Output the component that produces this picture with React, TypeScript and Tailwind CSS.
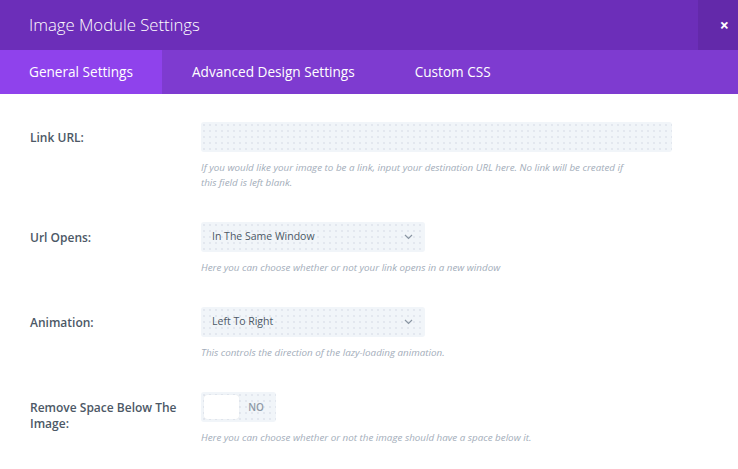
import React from "react";

const dots =
  "bg-[#f1f5f9] bg-[radial-gradient(#e2e7ee_0.7px,transparent_0.8px)] bg-[length:6px_6px]";

function Chevron() {
  return (
    <svg width="9" height="6" viewBox="0 0 9 6" className="text-[#8a96a3]">
      <path d="M1 1l3.5 3.5L8 1" fill="none" stroke="currentColor" strokeWidth="1.2" />
    </svg>
  );
}

function Row({
  label,
  desc,
  children,
}: {
  label: string;
  desc: React.ReactNode;
  children: React.ReactNode;
}) {
  return (
    <div className="flex mb-[32px]">
      <div className="w-[171px] pr-[20px] pt-[8px] text-[12px] leading-[16px] font-semibold text-[#4c5866]">
        {label}
      </div>
      <div className="flex-1">
        {children}
        <div className="mt-[8px] max-w-[425px] text-[9.8px] leading-[15px] italic text-[#a3adba]">
          {desc}
        </div>
      </div>
    </div>
  );
}

function Select({ value }: { value: string }) {
  return (
    <div className={`w-[224px] h-[30px] rounded-[3px] ${dots} flex items-center justify-between pl-[11px] pr-[12px]`}>
      <span className="text-[10.5px] text-[#4c5866]">{value}</span>
      <Chevron />
    </div>
  );
}

export default function App() {
  return (
    <div className="w-[738px] h-[469px] bg-white overflow-hidden font-['Open_Sans',sans-serif]">
      <div className="h-[50px] bg-[#6c2eb9] flex">
        <div className="flex-1 flex items-center pl-[29px] text-[16.7px] font-light text-white">
          Image Module Settings
        </div>
        <div className="w-[40px] bg-[#6329aa] flex items-center justify-end pr-[9px] text-white text-[16px] font-bold">
          ×
        </div>
      </div>
      <div className="h-[44px] bg-[#7e3bd0] flex text-[13.6px] text-white">
        <div className="w-[162px] bg-[#8f42ec] flex items-center pl-[29px]">General Settings</div>
        <div className="flex items-center pl-[30px] pr-[30px]">Advanced Design Settings</div>
        <div className="flex items-center pl-[30px]">Custom CSS</div>
      </div>
      <div className="pt-[28px] pl-[30px] pr-[66px]">
        <Row
          label="Link URL:"
          desc="If you would like your image to be a link, input your destination URL here. No link will be created if this field is left blank."
        >
          <div className={`h-[30px] rounded-[3px] ${dots}`} />
        </Row>
        <Row label="Url Opens:" desc="Here you can choose whether or not your link opens in a new window">
          <Select value="In The Same Window" />
        </Row>
        <Row label="Animation:" desc="This controls the direction of the lazy-loading animation.">
          <Select value="Left To Right" />
        </Row>
        <Row
          label="Remove Space Below The Image:"
          desc="Here you can choose whether or not the image should have a space below it."
        >
          <div className={`w-[75px] h-[30px] rounded-[3px] ${dots} flex items-center p-[3px]`}>
            <div className="w-[35px] h-[24px] bg-white rounded-[3px] shadow-[0_0_1px_rgba(0,0,0,0.15)]" />
            <span className="flex-1 text-center text-[10px] font-semibold text-[#8f99a6]">NO</span>
          </div>
        </Row>
      </div>
    </div>
  );
}
